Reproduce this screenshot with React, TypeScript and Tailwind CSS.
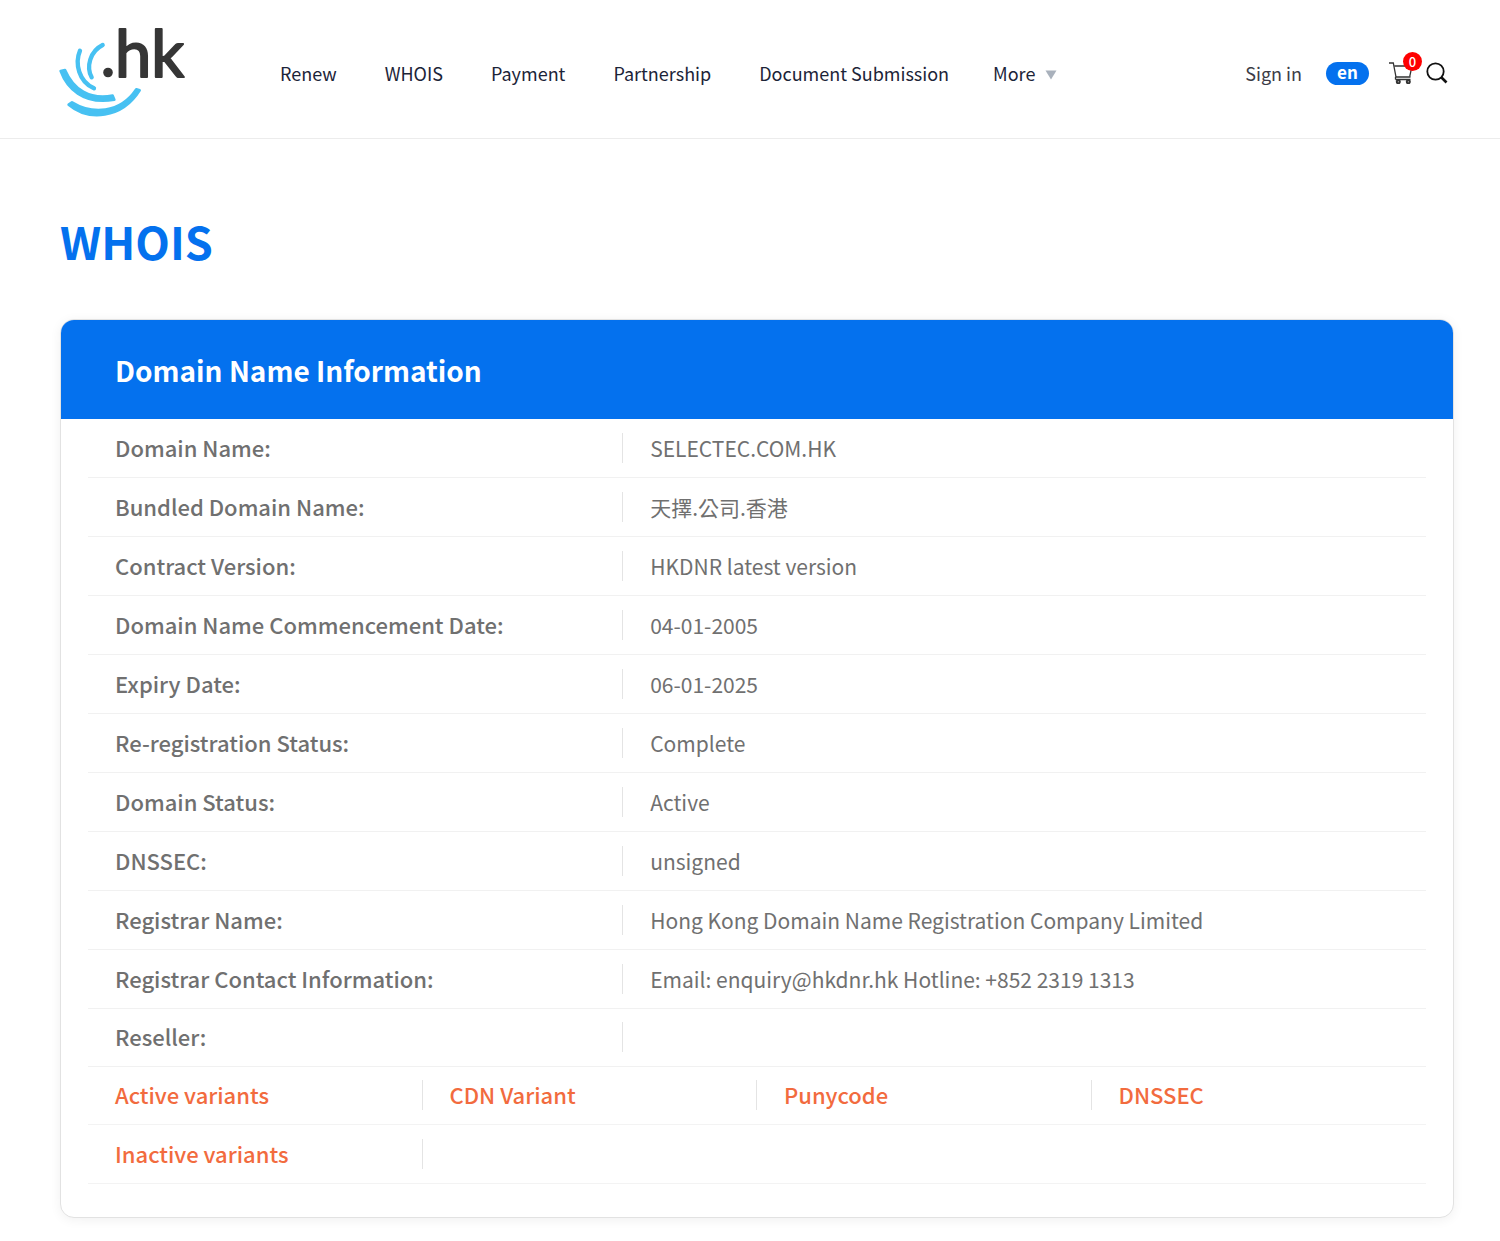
import React from "react";

const navItems = ["Renew", "WHOIS", "Payment", "Partnership", "Document Submission"];

const details: { label: string; value: string }[] = [
  { label: "Domain Name:", value: "SELECTEC.COM.HK" },
  { label: "Bundled Domain Name:", value: "天擇.公司.香港" },
  { label: "Contract Version:", value: "HKDNR latest version" },
  { label: "Domain Name Commencement Date:", value: "04-01-2005" },
  { label: "Expiry Date:", value: "06-01-2025" },
  { label: "Re-registration Status:", value: "Complete" },
  { label: "Domain Status:", value: "Active" },
  { label: "DNSSEC:", value: "unsigned" },
  { label: "Registrar Name:", value: "Hong Kong Domain Name Registration Company Limited" },
  { label: "Registrar Contact Information:", value: "Email: enquiry@hkdnr.hk Hotline: +852 2319 1313" },
  { label: "Reseller:", value: "" },
];

const variants: string[][] = [
  ["Active variants", "CDN Variant", "Punycode", "DNSSEC"],
  ["Inactive variants", "", "", ""],
];

function Logo() {
  return (
    <svg width="132" height="122" viewBox="58 8 132 122" className="overflow-visible" role="img" aria-label=".hk">
      <g transform="translate(50 20) scale(0.3333)" stroke="#47c1f2" strokeLinejoin="round" strokeLinecap="round">
        <path
          d="M32 153C50 202 98 256 193 239L188 227C118 240 70 208 45 150Z"
          fill="#47c1f2"
          strokeWidth="8"
        />
        <path
          d="M56 254C115 304 215 297 269 211L259 208C210 282 125 283 66 247Z"
          fill="#47c1f2"
          strokeWidth="8"
        />
        <path d="M90 92C74 130 86 185 132 205" fill="none" strokeWidth="13" />
        <path d="M158 75C120 94 108 140 125 172" fill="none" strokeWidth="13" />
      </g>
      <circle cx="108" cy="72.500" r="4.800" fill="#363636" />
      <text
        x="115"
        y="77"
        fill="#363636"
        stroke="#363636"
        strokeWidth="2"
        strokeLinejoin="round"
        fontSize="65"
        fontFamily="Lato, sans-serif"
      >
        hk
      </text>
    </svg>
  );
}

function CartIcon() {
  return (
    <svg width="24" height="22" viewBox="0 0 24 22" fill="none" stroke="#333" strokeWidth="1.3" aria-hidden="true">
      <path d="M0 1H4.300L7 15" />
      <path d="M5.300 4H23L20.700 14.700" />
      <path d="M6.500 15H21.500M6.500 17.500H21.500M6.500 15V17.500" />
      <circle cx="9.300" cy="19.800" r="1.500" strokeWidth="2" />
      <circle cx="19.300" cy="19.800" r="1.500" strokeWidth="2" />
    </svg>
  );
}

function Header() {
  return (
    <header className="flex h-[139px] items-center border-b border-[#ececec] pr-[52px] pl-[58px]">
      <a href="#" className="block">
        <Logo />
      </a>
      <nav className="ml-[90px] flex items-center gap-12 pt-2 text-[18px] leading-7 text-[#1c2438]">
        {navItems.map((item) => (
          <a key={item} href="#" className="whitespace-nowrap">
            {item}
          </a>
        ))}
        <button type="button" className="-ml-1 flex items-center gap-2.5">
          More
          <svg width="12" height="10" viewBox="0 0 12 10" className="mt-1" aria-hidden="true">
            <path d="M0.500 0.500H11.500L6 9.500Z" fill="#a9b1bc" />
          </svg>
        </button>
      </nav>
      <div className="ml-auto flex items-center pt-2">
        <a href="#" className="text-[18px] leading-7 text-[#3c3c46]">
          Sign in
        </a>
        <button
          type="button"
          className="ml-6 flex h-[23px] w-[43px] items-center justify-center rounded-full bg-[#0471ee] pb-0.5 text-[17px] leading-5 font-bold text-white"
        >
          en
        </button>
        <button type="button" aria-label="Cart" className="relative ml-5">
          <CartIcon />
          <span className="absolute -top-2.5 left-[14px] flex size-[19px] items-center justify-center rounded-full bg-[#fe0000] text-[13px] leading-4 font-medium text-white">
            0
          </span>
        </button>
        <button type="button" aria-label="Search" className="ml-[13px]">
          <svg width="22" height="22" viewBox="0 0 22 22" fill="none" stroke="#111" aria-hidden="true">
            <circle cx="9.500" cy="9.500" r="8.200" strokeWidth="1.800" />
            <path d="M15 15L20.500 20.500" strokeWidth="2.600" />
          </svg>
        </button>
      </div>
    </header>
  );
}

function DetailsTable() {
  return (
    <table className="w-full table-fixed border-collapse text-[#707070]">
      <tbody>
        {details.map((row) => (
          <tr key={row.label} className="h-[59px] border-b border-[#f1f1f1] first:h-[58px] last:h-[58px]">
            <th scope="row" className="w-2/5 p-0 text-left text-[22px] leading-7 font-medium">
              <div className="h-[30px] border-r border-[#e4e4e4] pl-[27px]">{row.label}</div>
            </th>
            <td className="p-0 text-[21px] leading-[30px]">
              <div className="h-[30px] pl-[27px]">{row.value}</div>
            </td>
          </tr>
        ))}
      </tbody>
    </table>
  );
}

function VariantsTable() {
  return (
    <table className="w-full table-fixed border-collapse text-[22px] leading-7 text-[#f26b3e]">
      <tbody>
        {variants.map((cells) => (
          <tr key={cells[0]} className="h-[59px] border-b border-[#f3f3f3] first:h-[58px]">
            {cells.map((cell, i) => {
              const divided = i < 3 && cell !== "";
              return (
                <td key={i} className="p-0 font-medium">
                  <div className={divided ? "h-[30px] border-r border-[#e4e4e4] pl-[27px]" : "h-[30px] pl-[27px]"}>
                    {cell && <a href="#">{cell}</a>}
                  </div>
                </td>
              );
            })}
          </tr>
        ))}
      </tbody>
    </table>
  );
}

export default function App() {
  return (
    <div className="bg-white font-['Noto_Sans_CJK_TC',sans-serif]">
      <Header />
      <main className="pt-[72px] pr-[46px] pb-6 pl-[60px]">
        <h1 className="text-[45px] leading-[60px] font-bold text-[#0471ee]">WHOIS</h1>
        <section className="mt-12 overflow-hidden rounded-[14px] border border-[#e2e2e2] bg-white pb-[33px] shadow-[0_2px_12px_rgba(0,0,0,0.06)]">
          <h2 className="flex h-[99px] items-center bg-[#0471ee] pl-[54px] text-[28px] leading-10 font-bold text-white">
            Domain Name Information
          </h2>
          <div className="px-[27px]">
            <DetailsTable />
            <VariantsTable />
          </div>
        </section>
      </main>
    </div>
  );
}
